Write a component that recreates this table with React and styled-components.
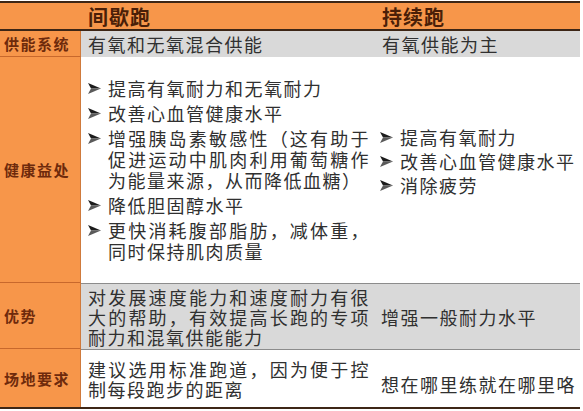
import React from 'react'
import styled, { createGlobalStyle } from 'styled-components'

const GlobalStyle = createGlobalStyle`
    html, body {
        margin: 0;
        padding: 0;
        background: #ffffff;
    }
    body {
        font-family: "Noto Sans CJK SC", "Noto Sans", sans-serif;
        padding-top: 1px;
    }
`

const ORANGE = '#f7964a'
const GRAY = '#d9d9d9'
const DARK = '#3d2616'

const Table = styled.div`
    width: 580px;
    display: grid;
    grid-template-columns: 81px 291px 1fr;
    grid-template-rows: 28px 26px 226px 66px 58px;
    border-top: 2px solid ${DARK};
    border-bottom: 2px solid ${DARK};
    box-sizing: content-box;
`

const HeadCell = styled.div`
    background: ${ORANGE};
    border-bottom: 2px solid ${DARK};
    box-sizing: border-box;
    display: flex;
    align-items: center;
    padding-left: ${p => p.$pad || 0}px;
    font-size: 20px;
    font-weight: 700;
    letter-spacing: 1px;
    color: #4a1f08;
`

const Label = styled.div`
    background: ${ORANGE};
    border-right: 1px solid #cf7a3c;
    border-bottom: ${p => (p.$last ? 'none' : '1px solid #c8682c')};
    box-sizing: border-box;
    display: flex;
    align-items: center;
    padding-left: 4px;
    font-size: 15px;
    font-weight: 700;
    letter-spacing: 1.5px;
    color: #6e2a0c;
`

const Cell = styled.div`
    background: ${p => (p.$gray ? GRAY : '#ffffff')};
    border-top: ${p => (p.$rule ? '1px solid #8c8c8c' : 'none')};
    box-sizing: border-box;
    display: flex;
    align-items: center;
    padding-left: ${p => p.$pad}px;
    padding-right: 2px;
    font-size: 18px;
    letter-spacing: 1.5px;
    line-height: 20px;
    color: #303030;
`

const Para = styled.div`
    width: 100%;
    text-align: justify;
    margin-top: ${p => p.$shift || 0}px;
`

const List = styled.ul`
    list-style: none;
    margin: 0 0 ${p => p.$lift || 0}px 0;
    padding: 0;
    width: 100%;
    display: flex;
    flex-direction: column;
    gap: ${p => p.$gap}px;
    line-height: 21px;
`

const Item = styled.li`
    display: flex;
    align-items: flex-start;
`

const Bullet = styled.svg`
    flex: 0 0 auto;
    width: 13px;
    height: 11px;
    margin: 5px 7px 0 0;
`

const ItemText = styled.span`
    flex: 1;
    text-align: justify;
`

const Arrow = () => (
    <Bullet viewBox="0 0 13 11">
        <polygon points="0,0 13,5.5 3,5.5" fill="#1c1c1c" />
        <polygon points="3,5.5 13,5.5 0,11" fill="#5a5a5a" />
    </Bullet>
)

const intervalBenefits = [
    '提高有氧耐力和无氧耐力',
    '改善心血管健康水平',
    '增强胰岛素敏感性（这有助于促进运动中肌肉利用葡萄糖作为能量来源，从而降低血糖）',
    '降低胆固醇水平',
    '更快消耗腹部脂肪，减体重，同时保持肌肉质量',
]

const steadyBenefits = ['提高有氧耐力', '改善心血管健康水平', '消除疲劳']

const Bullets = ({ items, gap, lift }) => (
    <List $gap={gap} $lift={lift}>
        {items.map(text => (
            <Item key={text}>
                <Arrow />
                <ItemText>{text}</ItemText>
            </Item>
        ))}
    </List>
)

const App = () => (
    <>
        <GlobalStyle />
        <Table>
            <HeadCell />
            <HeadCell $pad={7}>间歇跑</HeadCell>
            <HeadCell $pad={10}>持续跑</HeadCell>

            <Label>供能系统</Label>
            <Cell $gray $pad={7}>有氧和无氧混合供能</Cell>
            <Cell $gray $pad={10}>有氧供能为主</Cell>

            <Label>健康益处</Label>
            <Cell $pad={7}>
                <Bullets items={intervalBenefits} gap={4} />
            </Cell>
            <Cell $pad={8}>
                <Bullets items={steadyBenefits} gap={3} lift={18} />
            </Cell>

            <Label>优势</Label>
            <Cell $gray $rule $pad={7}>
                <Para>对发展速度能力和速度耐力有很大的帮助，有效提高长跑的专项耐力和混氧供能能力</Para>
            </Cell>
            <Cell $gray $rule $pad={9}>
                <Para>增强一般耐力水平</Para>
            </Cell>

            <Label $last>场地要求</Label>
            <Cell $rule $pad={7}>
                <Para>建议选用标准跑道，因为便于控制每段跑步的距离</Para>
            </Cell>
            <Cell $rule $pad={9}>
                <Para $shift={10}>想在哪里练就在哪里咯</Para>
            </Cell>
        </Table>
    </>
)

export default App
